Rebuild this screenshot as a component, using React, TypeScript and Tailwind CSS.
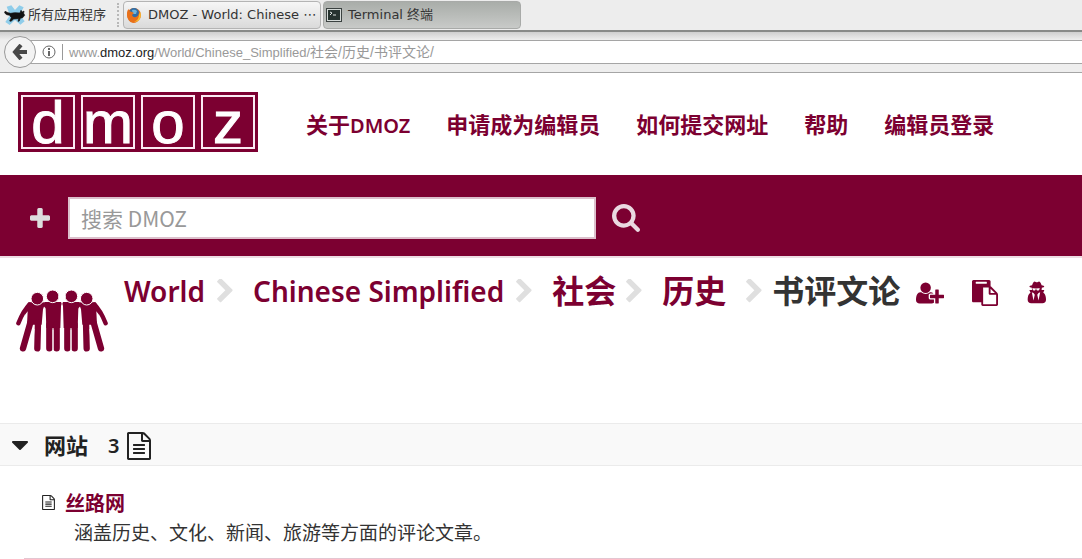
import type { ReactNode } from 'react';

const icons = {
  plus: 'M1600 736v192q0 40-28 68t-68 28h-416v416q0 40-28 68t-68 28h-192q-40 0-68-28t-28-68v-416h-416q-40 0-68-28t-28-68v-192q0-40 28-68t68-28h416v-416q0-40 28-68t68-28h192q40 0 68 28t28 68v416h416q40 0 68 28t28 68z',
  search:
    'M1216 832q0-185-131.5-316.5t-316.5-131.5-316.5 131.5-131.5 316.5 131.5 316.5 316.5 131.5 316.5-131.5 131.5-316.5zm512 832q0 52-38 90t-90 38q-54 0-90-38l-343-342q-179 124-399 124-143 0-273.5-55.5t-225-150-150-225-55.5-273.5 55.5-273.5 150-225 225-150 273.5-55.5 273.5 55.5 225 150 150 225 55.5 273.5q0 220-124 399l343 343q37 37 37 90z',
  chevron:
    'M1363 877l-742 742q-19 19-45 19t-45-19l-166-166q-19-19-19-45t19-45l531-531-531-531q-19-19-19-45t19-45l166-166q19-19 45-19t45 19l742 742q19 19 19 45t-19 45z',
  userPlus:
    'M704 896q-159 0-271.5-112.5t-112.5-271.5 112.5-271.5 271.5-112.5 271.5 112.5 112.5 271.5-112.5 271.5-271.5 112.5zm960 128h352q13 0 22.5 9.5t9.5 22.5v192q0 13-9.5 22.5t-22.5 9.5h-352v352q0 13-9.5 22.5t-22.5 9.5h-192q-13 0-22.5-9.5t-9.5-22.5v-352h-352q-13 0-22.5-9.5t-9.5-22.5v-192q0-13 9.5-22.5t22.5-9.5h352v-352q0-13 9.5-22.5t22.5-9.5h192q13 0 22.5 9.5t9.5 22.5v352zm-736 224q0 52 38 90t90 38h256v238q-68 50-171 50h-874q-121 0-194-69t-73-190q0-53 3.5-103.5t14-109 26.5-108.5 43-97.5 62-81 85.5-53.5 111.5-20q19 0 39 17 79 61 154.5 91.5t164.5 30.5 164.5-30.5 154.5-91.5q20-17 39-17 132 0 217 96h-223q-52 0-90 38t-38 90v192z',
  paste:
    'M768 1664h896v-640h-416q-40 0-68-28t-28-68v-416h-384v1152zm256-1440v-64q0-13-9.5-22.5t-22.5-9.5h-704q-13 0-22.5 9.5t-9.5 22.5v64q0 13 9.5 22.5t22.5 9.5h704q13 0 22.5-9.5t9.5-22.5zm256 672h299l-299-299v299zm512 128v672q0 40-28 68t-68 28h-960q-40 0-68-28t-28-68v-160h-544q-40 0-68-28t-28-68v-1344q0-40 28-68t68-28h1088q40 0 68 28t28 68v328q21 13 36 28l408 408q28 28 48 76t20 88z',
  secret:
    'M704 1536l96-448-96-128-128-64zm384 0l128-640-128 64-96 128zm96-930q-2-4-4-6-10-8-96-8-70 0-167 19-7 2-21 2t-21-2q-97-19-167-19-86 0-96 8-2 2-4 6 2 18 4 27 2 3 7.5 6.5t7.5 10.5q2 4 7.5 20.5t7 20.5 7.5 17 8.5 17 9 14 12 13.5 14 9.5 17.5 8 20.5 4 24.5 2q36 0 59-12.5t32.5-30 14.5-34.5 11.5-29.5 17.5-12.5h12q11 0 17.5 12.5t11.5 29.5 14.5 34.5 32.5 30 59 12.5q13 0 24.5-2t20.5-4 17.5-8 14-9.5 12-13.5 9-14 8.5-17 7.5-17 7-20.5 7.5-20.5q2-7 7.5-10.5t7.5-6.5q2-9 4-27zm480 879q0 121-73 190t-194 69h-874q-121 0-194-69t-73-190q0-61 4.5-118t19-125.5 37.5-123.5 63.5-103.5 93.5-74.5l-90-220h214q-22-64-22-128 0-12 2-32-194-40-194-96 0-57 210-99 17-62 51.5-134t70.5-114q32-37 76-37 30 0 84 31t84 31 84-31 84-31q44 0 76 37 36 42 70.5 114t51.5 134q210 42 210 99 0 56-194 96 7 81-20 160h214l-82 225q63 33 107.5 96.5t65.5 143.5 29 151.5 8 157.5z',
  file: 'M1596 380q28 28 48 76t20 88v1152q0 40-28 68t-68 28h-1344q-40 0-68-28t-28-68v-1600q0-40 28-68t68-28h896q40 0 88 20t76 48zm-444-244v376h376q-10-29-22-41l-313-313q-12-12-41-22zm384 1528v-1024h-416q-40 0-68-28t-28-68v-416h-768v1536h1280zm-1024-864q0-14 9-23t23-9h704q14 0 23 9t9 23v64q0 14-9 23t-23 9h-704q-14 0-23-9t-9-23v-64zm736 224q14 0 23 9t9 23v64q0 14-9 23t-23 9h-704q-14 0-23-9t-9-23v-64q0-14 9-23t23-9h704zm0 256q14 0 23 9t9 23v64q0 14-9 23t-23 9h-704q-14 0-23-9t-9-23v-64q0-14 9-23t23-9h704z',
  caret: 'M1408 704q0 26-19 45l-448 448q-19 19-45 19t-45-19l-448-448q-19-19-19-45t19-45 45-19h896q26 0 45 19t19 45z',
};

function Icon({ name, box = '0 0 1792 1792', className }: { name: keyof typeof icons; box?: string; className: string }) {
  return (
    <svg viewBox={box} fill="currentColor" aria-hidden="true" className={`shrink-0 ${className}`}>
      <path d={icons[name]} />
    </svg>
  );
}

function XfceLogo() {
  return (
    <svg viewBox="0 0 66 66" className="w-[22px] h-[22px] shrink-0" aria-hidden="true">
      <path d="M8 8l14-4 11 14L46 4l13 6-12 22 15 20-13 10-16-14-16 15L4 54l14-20z" fill="#8fcdea" />
      <path d="M3 22l9 4 8 2 12-2 16 1 3-8 4 5 5-3-1 7 3 6-6 7-7 2-3 8-4 1 2-8-15 1-8 7-4-1 5-10-5-7-9-2-6-5z" fill="#111" stroke="#111" strokeWidth="2" />
    </svg>
  );
}

function FirefoxLogo() {
  return (
    <svg viewBox="0 0 16 16" className="w-4 h-4 shrink-0" aria-hidden="true">
      <circle cx="8" cy="8" r="7" fill="#e8701a" />
      <circle cx="8" cy="6" r="5" fill="#2f6ea8" />
      <path d="M6 3q3-1 5 1l-1 3-3 0z" fill="#6fb6dc" />
      <path d="M1 6q0-3 2-4v2l3 1 2 1-2 2q1 3 4 2 3-1 3-5 2 3 1 6-2 5-7 5-6-1-6-10z" fill="#e8701a" />
      <path d="M14 5q2 4-1 8-2 2-5 2 5-2 5-7z" fill="#f8c331" />
    </svg>
  );
}

function TerminalLogo() {
  return (
    <svg viewBox="0 0 16 14" className="w-4 h-3.5 shrink-0" aria-hidden="true">
      <path d="M0 0h16v14H0z" fill="#3b4241" />
      <path d="M1 1h14v12H1z" fill="#d5dad8" />
      <path d="M2 2h12v10H2z" fill="#26332f" />
      <path d="M4 4l2 1-2 2M7 7h3" stroke="#dfe6e3" fill="none" />
    </svg>
  );
}

function PeopleLogo() {
  return (
    <svg viewBox="47 88 276 186" className="w-[92px] h-[62px] shrink-0" fill="#7c0031" stroke="#7c0031" strokeLinecap="round" strokeLinejoin="round" aria-hidden="true">
      {[undefined, 'translate(370 0) scale(-1 1)'].map((flip, i) => (
        <g key={i} transform={flip}>
          <path d="M88 132Q70 148 54 188" fill="none" strokeWidth="13" />
          <path d="M84 125H130L134 130 128 146 124 192H80L82 152 74 162 76 136z" stroke="none" />
          <path d="M90 186L68 263M113 186L111 263" fill="none" strokeWidth="19" />
          <path d="M132 124H182Q186 128 182 136L180 202H138L136 144 130 136z" stroke="none" />
          <path d="M147 192V263M169 192V263" fill="none" strokeWidth="19" />
          <path d="M101 206L96 264M158 208V266M133 142L128 190" fill="none" stroke="#fff" strokeWidth="3" />
          <circle cx="111" cy="114" r="19" stroke="#fff" strokeWidth="3" />
          <circle cx="157" cy="107" r="19" stroke="#fff" strokeWidth="3" />
        </g>
      ))}
    </svg>
  );
}

function Crumb({ children, className = '' }: { children: ReactNode; className?: string }) {
  return (
    <a href="#" className={`whitespace-nowrap ${className}`}>
      {children}
    </a>
  );
}

function Chevron({ className }: { className: string }) {
  return <Icon name="chevron" box="346 80 1056 1600" className={`w-4 h-6 text-[#dfdfdf] ${className}`} />;
}

const navLinks = ['申请成为编辑员', '如何提交网址', '帮助', '编辑员登录'];

export default function App() {
  return (
    <div className="bg-white overflow-hidden font-['Noto_Sans','Noto_Sans_CJK_SC',sans-serif] text-[#222]">
      {/* Desktop panel */}
      <div className="flex items-center h-8 bg-[#ededed] border-b-2 border-[#888a88] pl-1 text-[13px] text-[#333] font-['DejaVu_Sans','Noto_Sans_CJK_SC',sans-serif]">
        <button className="flex items-center gap-0.5 whitespace-nowrap">
          <XfceLogo />
          所有应用程序
        </button>
        <span className="h-6 ml-[11px] border-l-2 border-dotted border-[#b8b8b8]" />
        <button className="flex items-center gap-1.5 w-[198px] h-7 ml-1 px-0.5 border border-[#b4b4b4] rounded-sm bg-gradient-to-b from-[#f6f6f6] to-[#dadada] whitespace-nowrap">
          <FirefoxLogo />
          DMOZ - World: Chinese ⋯
        </button>
        <button className="flex items-center gap-1.5 w-[198px] h-7 ml-0.5 px-0.5 border border-[#a8aaa8] rounded-sm bg-gradient-to-b from-[#a9ada9] to-[#c8cac8] whitespace-nowrap">
          <TerminalLogo />
          Terminal 终端
        </button>
      </div>

      {/* Address bar */}
      <div className="flex items-center h-[41px] pl-1 bg-gradient-to-b from-[#cfcfcf] to-[#eeeeee] to-20% border-b border-[#a5a5a5]">
        <button aria-label="Back" className="z-10 flex items-center justify-center w-8 h-8 rounded-full bg-[#f3f3f3] border border-[#999]">
          <svg viewBox="0 0 16 16" className="w-4 h-4" fill="none" stroke="#484848" strokeWidth="4" aria-hidden="true">
            <path d="M3 8h12M9 1L3 8l6 7" />
          </svg>
        </button>
        <div className="flex items-center flex-1 h-6 -ml-2 pl-3.5 bg-white border-y border-[#a5a5a5] text-[13px] text-[#999] whitespace-nowrap font-['Liberation_Sans','Noto_Sans_CJK_SC',sans-serif]">
          <svg viewBox="0 0 14 14" className="w-3.5 h-3.5 shrink-0" fill="none" stroke="#666" aria-hidden="true">
            <circle cx="7" cy="7" r="6" />
            <path d="M7 6v5M7 3v2" strokeWidth="2" />
          </svg>
          <span className="h-4 mx-1.5 border-l border-[#999]" />
          <span>
            www.<span className="text-[#222]">dmoz.org</span>/World/Chinese_Simplified/
            <span className="text-sm">社会/历史/书评文论/</span>
          </span>
        </div>
      </div>

      <header className="flex items-center h-[102px] pl-[18px] pb-1">
        <a href="#" aria-label="dmoz" className="flex shrink-0 h-[60px] bg-[#7c0031]">
          {['d', 'm', 'o', 'z'].map((letter) => (
            <span key={letter} className="flex w-[60px] p-[3px]">
              <span className="flex-1 border-2 border-[#fbeaf3] text-center text-[60px] leading-[52px] text-white font-['Liberation_Sans',sans-serif] [-webkit-text-stroke:1px_white]">
                {letter}
              </span>
            </span>
          ))}
        </a>
        <nav className="flex items-baseline gap-9 ml-12 pt-1 text-[22px] font-semibold text-[#7c0031] whitespace-nowrap">
          <a href="#">
            关于<span className="text-[20px]">DMOZ</span>
          </a>
          {navLinks.map((link) => (
            <a key={link} href="#">
              {link}
            </a>
          ))}
        </nav>
      </header>

      <form className="flex items-center h-[83px] pt-1 pl-[30px] bg-[#7c0031] border-b-2 border-[#ecdde3] text-[#ead9e1]">
        <button type="button" aria-label="Advanced search">
          <Icon name="plus" box="192 128 1408 1408" className="w-5 h-5 text-[#dddddd]" />
        </button>
        <input
          type="text"
          aria-label="搜索 DMOZ"
          placeholder="搜索 DMOZ"
          className="w-[528px] h-[42px] ml-[18px] px-[11px] bg-white border-2 border-[#dcc0cc] text-[21px] text-[#333] placeholder-[#999] outline-none font-['Noto_Sans_CJK_SC',sans-serif]"
        />
        <button type="submit" aria-label="Search" className="ml-4">
          <Icon name="search" box="64 128 1664 1664" className="w-7 h-7" />
        </button>
      </form>

      <div className="flex items-start h-[165px] pl-4">
        <div className="pt-8">
          <PeopleLogo />
        </div>
        <div className="flex items-center h-[66px] ml-4 text-[32px] font-semibold text-[#7c0031]">
          <Crumb className="text-[28px]">World</Crumb>
          <Chevron className="ml-3 mr-5" />
          <Crumb className="text-[28px]">Chinese Simplified</Crumb>
          <Chevron className="ml-3 mr-5" />
          <Crumb>社会</Crumb>
          <Chevron className="ml-2.5 mr-5" />
          <Crumb>历史</Crumb>
          <Chevron className="ml-5 mr-2.5" />
          <h1 className="text-[#333] whitespace-nowrap">书评文论</h1>
          <div className="flex items-center gap-7 ml-4 pt-1">
            <a href="#" aria-label="Become an editor">
              <Icon name="userPlus" box="0 128 2048 1536" className="w-7 h-[22px]" />
            </a>
            <a href="#" aria-label="Suggest a site">
              <Icon name="paste" className="w-[26px] h-[26px]" />
            </a>
            <a href="#" aria-label="Report abuse">
              <Icon name="secret" box="128 128 1536 1664" className="w-5 h-6" />
            </a>
          </div>
        </div>
      </div>

      <section>
        <div className="flex items-center h-[43px] pt-0.5 pl-3 bg-[#f9f9f9] border-y border-[#ebebeb] text-[22px] font-semibold">
          <Icon name="caret" box="384 640 1024 576" className="w-4 h-[9px]" />
          <h2 className="ml-4">网站</h2>
          <span className="ml-5 mr-2 text-xl">3</span>
          <Icon name="file" box="128 0 1536 1792" className="w-6 h-7" />
        </div>
        <ul className="ml-6 pt-6">
          <li className="pb-2.5 pl-[18px] border-b border-[#e3c6d1]">
            <div className="flex items-center gap-2.5 h-7">
              <Icon name="file" box="128 0 1536 1792" className="w-[13px] h-[15px] mb-1" />
              <a href="#" className="text-xl font-bold text-[#7c0031]">
                丝路网
              </a>
            </div>
            <p className="pl-8 text-[19px] leading-[30px] text-[#333]">涵盖历史、文化、新闻、旅游等方面的评论文章。</p>
          </li>
        </ul>
      </section>
    </div>
  );
}
